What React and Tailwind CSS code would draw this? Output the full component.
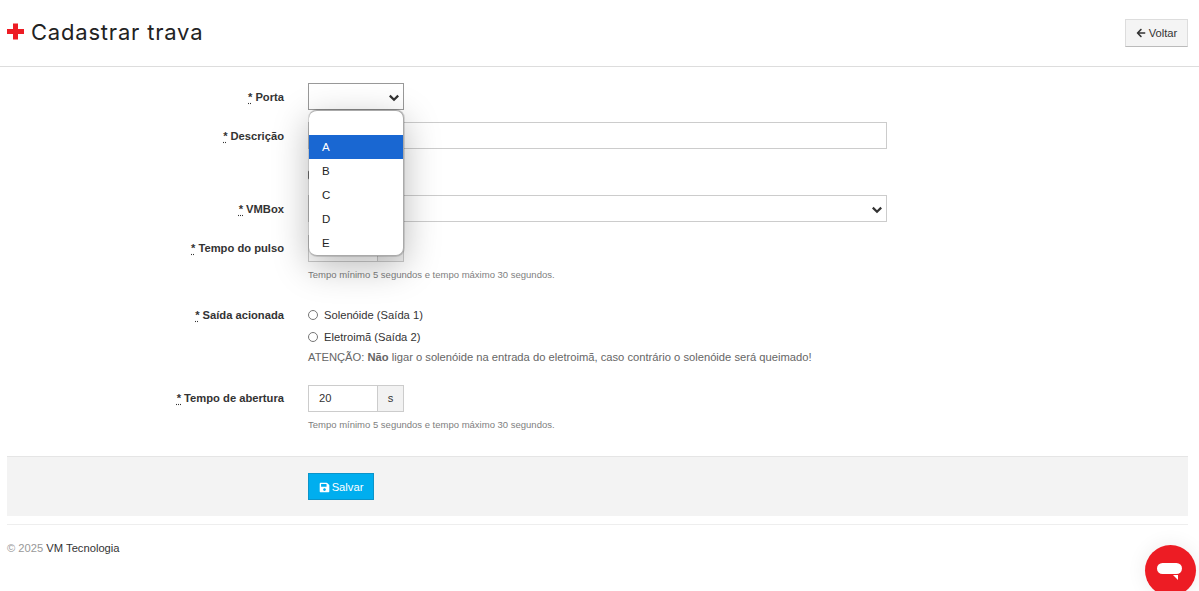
import React from "react";
import { FaArrowLeft, FaSave } from "react-icons/fa";

function Label({ children, mt = "mt-[7px]" }) {
  return (
    <label className={`w-[284px] shrink-0 text-right text-[11.2px] leading-[14px] font-bold text-[#333] ${mt}`}>
      <abbr className="font-bold text-[#333] underline decoration-dotted underline-offset-2 mr-[3px]">*</abbr>
      {children}
    </label>
  );
}

function Chevron({ className }) {
  return (
    <svg width="12" height="12" viewBox="0 0 12 12" className={className}>
      <path d="M1.8 3.6 L6 7.8 L10.2 3.6" fill="none" stroke="#333" strokeWidth="2.2" />
    </svg>
  );
}

function Select({ className }) {
  return (
    <div className={`relative h-[27px] bg-white ${className}`}>
      <Chevron className="absolute right-[3px] top-[8px]" />
    </div>
  );
}

function Addon({ value }) {
  return (
    <div className="flex h-[27px] w-[96px] border border-[#ccc] text-[11.2px] text-[#333]">
      <div className="flex-1 pl-[10px] leading-[25px] bg-white">{value}</div>
      <div className="w-[26px] bg-[#f2f2f2] border-l border-[#ccc] text-center leading-[25px]">s</div>
    </div>
  );
}

const Help = () => (
  <p className="text-[9.5px] leading-[11px] text-[#808080] mt-[7px] whitespace-nowrap">
    Tempo mínimo 5 segundos e tempo máximo 30 segundos.
  </p>
);

function Radio({ children }) {
  return (
    <div className="flex items-center h-[14px] text-[11.2px] text-[#333]">
      <span className="w-[10px] h-[10px] rounded-full border border-[#767676] bg-white mr-[6px]" />
      {children}
    </div>
  );
}

export default function App() {
  return (
    <div className="relative h-[591px] overflow-hidden bg-white" style={{ fontFamily: '"Liberation Sans", Arial, sans-serif' }}>
      <header className="flex items-center justify-between h-[67px] border-b border-[#ddd] pl-[7px] pr-[11px] pb-[3px]">
        <div className="flex items-center gap-[7px]">
          <svg width="17" height="17" viewBox="0 0 17 17">
            <path d="M6 0.5 H11 V6 H17 V11 H11 V16.5 H6 V11 H0 V6 H6 Z" fill="#ed1c24" />
          </svg>
          <h1 className="text-[22px] leading-[28px] tracking-[0.8px] text-[#222] font-normal" style={{ fontFamily: 'Inter, sans-serif' }}>
            Cadastrar trava
          </h1>
        </div>
        <button className="flex items-center justify-center gap-[3px] w-[63px] h-[28px] mt-[3px] bg-[#f4f4f4] border border-[#ddd] border-b-[#bbb] text-[11.2px] text-[#333]">
          <FaArrowLeft className="w-[10px] h-[10px]" />
          Voltar
        </button>
      </header>

      <main className="pt-[16px]">
        <div className="flex gap-[24px] h-[39px]">
          <Label>Porta</Label>
          <Select className="w-[96px] border border-[#999]" />
        </div>
        <div className="flex gap-[24px] h-[73px]">
          <Label>Descrição</Label>
          <div className="flex-1">
            <div className="w-[579px] h-[27px] border border-[#ccc] bg-white" />
            <div className="w-[10px] h-[10px] mt-[21px] rounded-[2px] border border-[#767676] bg-white" />
          </div>
        </div>
        <div className="flex gap-[24px] h-[40px]">
          <Label>VMBox</Label>
          <Select className="w-[579px] border border-[#ccc]" />
        </div>
        <div className="flex gap-[24px] h-[73px]">
          <Label mt="mt-[6px]">Tempo do pulso</Label>
          <div>
            <Addon value="" />
            <Help />
          </div>
        </div>
        <div className="flex gap-[24px] h-[77px]">
          <Label mt="mt-0">Saída acionada</Label>
          <div>
            <Radio>Solenóide (Saída 1)</Radio>
            <div className="mt-[8px]">
              <Radio>Eletroimã (Saída 2)</Radio>
            </div>
            <p className="mt-[6px] text-[11.2px] leading-[14px] text-[#666] whitespace-nowrap">
              ATENÇÃO: <b>Não</b> ligar o solenóide na entrada do eletroimã, caso contrário o solenóide será queimado!
            </p>
          </div>
        </div>
        <div className="flex gap-[24px] h-[71px]">
          <Label mt="mt-[6px]">Tempo de abertura</Label>
          <div>
            <Addon value="20" />
            <Help />
          </div>
        </div>

        <div className="ml-[7px] mr-[11px] h-[60px] bg-[#f3f3f3] border-t border-[#e5e5e5] pt-[16px] pl-[301px]">
          <button className="flex items-center justify-center gap-[2px] w-[66px] h-[27px] pt-[1px] bg-[#00aeef] border border-[#0b94c9] text-[11.2px] text-white">
            <FaSave className="w-[11px] h-[11px]" />
            Salvar
          </button>
        </div>

        <footer className="ml-[7px] mr-[11px] mt-[8px] border-t border-[#eee] pt-[16px] text-[11.2px] leading-[14px] text-[#999]">
          © 2025 <span className="text-[#333]">VM Tecnologia</span>
        </footer>
      </main>

      {/* open native select menu */}
      <div className="absolute left-[309px] top-[110px] w-[95px] h-[146px] bg-white border border-l-0 border-[#aaa] rounded-[8px] overflow-hidden shadow-[0_0_0_1px_rgba(0,0,0,0.12),0_10px_36px_rgba(0,0,0,0.28)] text-[11.5px] text-[#222]">
        <div className="h-[24px]" />
        {["A", "B", "C", "D", "E"].map((o) => (
          <div key={o} className={`h-[24px] pl-[13px] leading-[25px] ${o === "A" ? "bg-[#1967d2] text-white" : ""}`}>
            {o}
          </div>
        ))}
      </div>

      {/* chat launcher */}
      <div className="absolute left-[1145px] top-[545px] w-[51px] h-[51px] rounded-full bg-[#ed1c24] shadow-[0_0_20px_rgba(0,0,0,0.08)]">
        <div className="absolute left-[12px] top-[18px] w-[25px] h-[11px] rounded-full bg-white" />
        <svg width="6" height="6" viewBox="0 0 6 6" className="absolute left-[28px] top-[30px]">
          <path d="M0 0 H5 V5 Z" fill="#fff" />
        </svg>
      </div>
    </div>
  );
}
